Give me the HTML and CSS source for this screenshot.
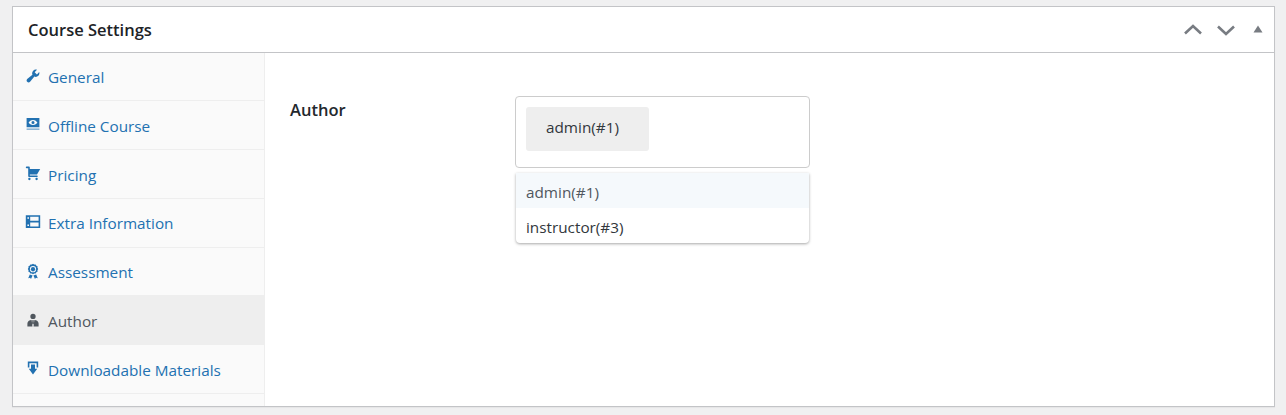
FILE: index.html
```html
<!DOCTYPE html>
<html lang="en">
<head>
<meta charset="utf-8">
<title>Course Settings</title>
<link rel="stylesheet" href="styles.css">
</head>
<body>
<section class="panel">
  <header class="panel-head">
    <h2 class="panel-title">Course Settings</h2>
    <div class="panel-controls">
      <svg class="ctl" viewBox="0 0 20 20"><path d="M2 13.500 10 6l8 7.500"/></svg>
      <svg class="ctl" viewBox="0 0 20 20"><path d="M2 6.500 10 14l8-7.500"/></svg>
      <svg class="ctl-tri" viewBox="0 0 10 8"><path d="M5 0.500 9.500 7.500H0.500z"/></svg>
    </div>
  </header>
  <div class="panel-body">
    <nav class="tabs">
      <a class="tab">
        <svg class="ico" viewBox="0 0 20 20"><path d="M16.680 9.770c-1.340 1.340-3.300 1.670-4.950.99l-5.410 6.520c-.99.99-2.590.99-3.580 0s-.99-2.590 0-3.580l6.520-5.410c-.68-1.650-.35-3.610.99-4.950 1.280-1.280 3.120-1.620 4.720-1.060l-2.890 2.890 2.820 2.820 2.860-2.870c.53 1.580.18 3.390-1.080 4.650z"/></svg>
        <span>General</span>
      </a>
      <a class="tab">
        <svg class="ico" viewBox="0 0 20 20"><path fill-rule="evenodd" d="M2 2.500h16v11.500H2zM10 5c-2.600 0-4.500 1.700-5.500 3.200 1 1.500 2.900 3.200 5.500 3.200s4.500-1.700 5.500-3.200C14.500 6.700 12.600 5 10 5zm0 1.300a1.900 1.900 0 1 1 0 3.800 1.900 1.900 0 0 1 0-3.800z"/><path class="soft" d="M2 15.500h16V17.500H2z"/></svg>
        <span>Offline Course</span>
      </a>
      <a class="tab">
        <svg class="ico" viewBox="0 0 20 20"><path d="M6 13h9c.55 0 1 .45 1 1s-.45 1-1 1H5c-.55 0-1-.45-1-1V4H2c-.55 0-1-.45-1-1s.45-1 1-1h3c.55 0 1 .45 1 1v2h13l-4 7H6v1zm-.5 3c.83 0 1.500.67 1.500 1.500S6.330 19 5.500 19 4 18.330 4 17.500 4.670 16 5.500 16zm9 0c.83 0 1.500.67 1.500 1.500s-.67 1.500-1.500 1.500-1.500-.67-1.500-1.500.67-1.500 1.500-1.500z"/></svg>
        <span>Pricing</span>
      </a>
      <a class="tab">
        <svg class="ico" viewBox="0 0 20 20"><path fill-rule="evenodd" d="M1 1.500h18v16H1zM6.500 3.500V8.500H17V3.500zM6.500 10.500V15.500H17V10.500zM3 4v2h2V4zM3 13v2h2v-2z"/></svg>
        <span>Extra Information</span>
      </a>
      <a class="tab">
        <svg class="ico" viewBox="0 0 20 20"><path fill-rule="evenodd" d="M10 1l1.500.9 1.800-.1.900 1.500 1.500.9-.1 1.800.9 1.500-.9 1.500.1 1.800-1.500.9-.9 1.500-1.800-.1-1.500.9-1.500-.9-1.800.1-.9-1.500-1.500-.9.1-1.800-.9-1.500.9-1.500-.1-1.800 1.500-.9.9-1.500 1.800.1zM10 3.900a3.900 3.900 0 1 0 0 7.800 3.900 3.900 0 0 0 0-7.800z"/><circle cx="10" cy="7.800" r="2.700"/><path d="M6 14.500 4 19l2.400-.5L7.500 20l2-4.500zM14 14.500 16 19l-2.400-.5L12.500 20l-2-4.500z"/></svg>
        <span>Assessment</span>
      </a>
      <a class="tab is-active">
        <svg class="ico" viewBox="0 0 20 20"><circle cx="10" cy="5.500" r="3.300"/><path d="M3 18v-3.500c0-2.800 2.200-4.300 5.300-4.600L9.300 18zM17 18v-3.500c0-2.800-2.200-4.300-5.300-4.600L10.700 18zM9.300 10h1.400l.5 4-1.200 2-1.200-2z"/></svg>
        <span>Author</span>
      </a>
      <a class="tab">
        <svg class="ico" viewBox="0 0 20 20"><path d="M3.500 2h13v7.500h-2V4h-9v5.500h-2z"/><path d="M7.500 5.500h5V11h2.800L10 18l-5.300-7h2.800z"/></svg>
        <span>Downloadable Materials</span>
      </a>
    </nav>
    <div class="content">
      <div class="field">
        <div class="field-label">Author</div>
        <div class="picker">
          <div class="picker-box"><span class="chip">admin(#1)</span></div>
          <ul class="dropdown">
            <li class="option is-current">admin(#1)</li>
            <li class="option">instructor(#3)</li>
          </ul>
        </div>
      </div>
    </div>
  </div>
</section>
</body>
</html>
```
FILE: styles.css
```css
* { box-sizing: border-box; }
html, body { margin: 0; height: 100%; overflow: hidden; }
body {
  background: #f0f0f1;
  padding: 6px 11px 0 12px;
  font-family: "Open Sans", "Noto Sans", sans-serif;
  font-size: 15.3px;
  color: #2c3338;
}
.panel {
  height: 401px;
  background: #fff;
  border: 1px solid #c3c4c7;
  box-shadow: 0 1px 1px rgba(0,0,0,.04);
  display: flex;
  flex-direction: column;
}
.panel-head {
  flex: none;
  height: 46px;
  border-bottom: 1px solid #c3c4c7;
  display: flex;
  align-items: center;
  justify-content: space-between;
  padding: 0 11px 0 15px;
}
.panel-title {
  margin: 0;
  font-size: 16.5px;
  font-weight: 600;
  color: #1d2327;
}
.panel-controls { display: flex; align-items: center; }
.ctl { width: 20px; height: 20px; margin-right: 13px; }
.ctl path { fill: none; stroke: #787c82; stroke-width: 2.6; }
.ctl-tri { width: 10px; height: 8px; margin-left: 4px; margin-bottom: 2px; }
.ctl-tri path { fill: #787c82; }
.panel-body { flex: 1; display: flex; min-height: 0; }
.tabs {
  flex: none;
  width: 252px;
  background: #fafafa;
  border-right: 1px solid #eee;
  display: flex;
  flex-direction: column;
}
.tab {
  flex: none;
  height: 48.8px;
  padding: 1.4px 0 0 12px;
  border-bottom: 1px solid #eee;
  display: flex;
  align-items: center;
  gap: 7px;
  color: #2271b1;
}
.tab:first-child { height: 48.2px; }
.tab.is-active {
  background: #eee;
  color: #50575e;
  margin-top: -1px;
  height: 49.8px;
  margin-right: -1px;
  padding-top: 2.6px;
}
.ico { width: 16px; height: 16px; flex: none; fill: currentColor; margin-top: -3px; }
.soft { opacity: .5; }
.content { flex: 1; padding: 43px 24px 0 25px; }
.field { display: flex; }
.field-label {
  width: 225px;
  font-size: 16.5px;
  font-weight: 600;
  color: #23282d;
  line-height: 28px;
}
.picker { position: relative; width: 295px; }
.picker-box {
  height: 72px;
  padding: 10px;
  border: 1px solid #ccc;
  border-radius: 4px;
}
.chip {
  display: inline-block;
  width: 123px;
  height: 44px;
  line-height: 41px;
  padding-left: 20px;
  background: #eee;
  border-radius: 3px;
  color: #32373c;
}
.dropdown {
  position: absolute;
  left: 1px;
  right: 1px;
  top: 77px;
  margin: 0;
  padding: 0;
  list-style: none;
  background: #fff;
  border-radius: 0 0 4px 4px;
  box-shadow: 0 1px 3px rgba(0,0,0,.35);
}
.option { height: 35px; line-height: 38px; padding-left: 10px; color: #32373c; }
.option.is-current { background: #f5f9fc; color: #50575e; }
```
